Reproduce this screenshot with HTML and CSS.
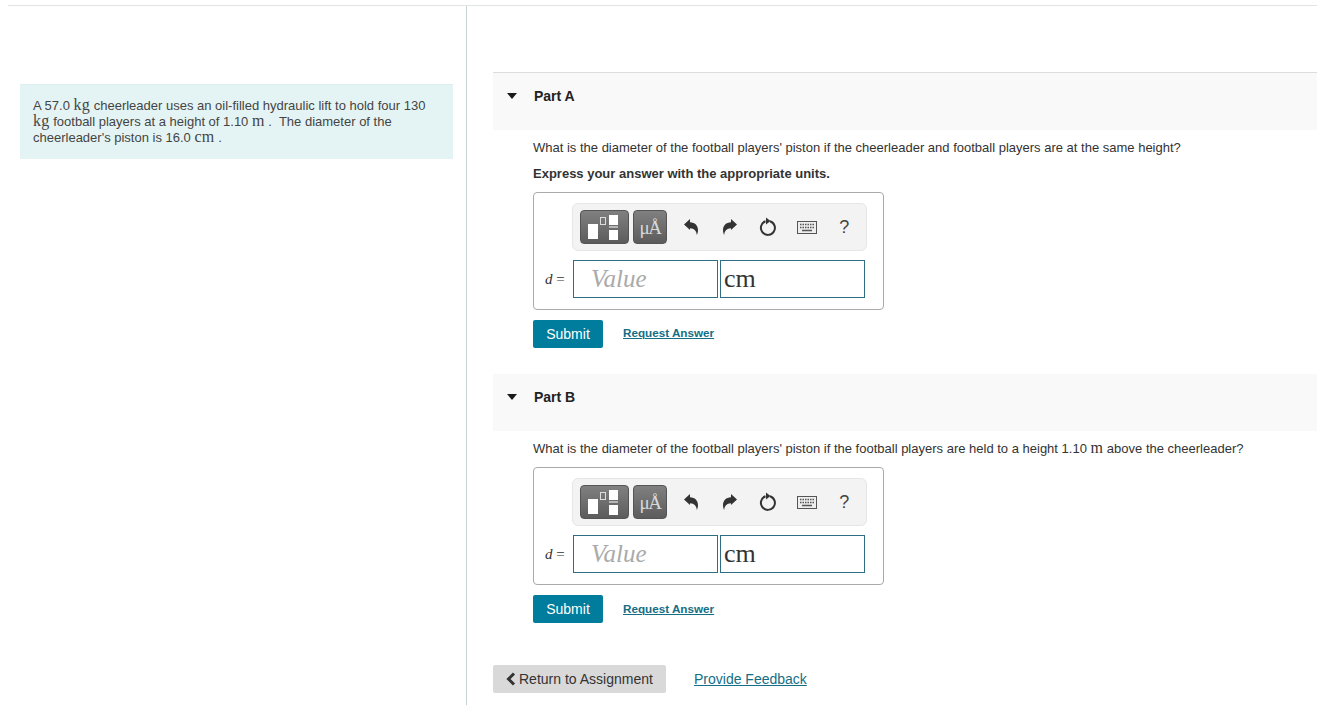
FILE: index.html
```html
<!DOCTYPE html>
<html lang="en">
<head>
    <meta charset="UTF-8">
    <title>Part A</title>
    <link rel="stylesheet" href="styles.css">
</head>
<body>
    <div class="page">
        <div class="left">
            <div class="passage">
                A 57.0 <span class="unit">kg</span> cheerleader uses an oil-filled hydraulic lift to hold four 130
                <span class="unit">kg</span> football players at a height of 1.10 <span class="unit">m</span> .&nbsp; The diameter of the
                cheerleader's piston is 16.0 <span class="unit">cm</span> .
            </div>
        </div>
        <div class="right">
            <div class="part part-a">
                <div class="part-head">
                    <span class="caret"></span>
                    <span class="part-title">Part A</span>
                </div>
                <div class="part-body">
                    <p class="question">What is the diameter of the football players' piston if the cheerleader and football players are at the same height?</p>
                    <p class="express">Express your answer with the appropriate units.</p>
                    <div class="answer">
                        <div class="toolbar">
                            <button class="tool tool-templates">
                                <svg width="30" height="25" viewBox="0 0 30 25">
                                    <rect x="0" y="9" width="10" height="15" fill="#fff"/>
                                    <rect x="12.500" y="2.500" width="5" height="7" fill="none" stroke="#ddd"/>
                                    <rect x="21" y="0" width="9" height="10" fill="#fff"/>
                                    <rect x="21" y="11.500" width="9" height="1" fill="#fff"/>
                                    <rect x="21" y="15" width="9" height="10" fill="#fff"/>
                                </svg>
                            </button>
                            <button class="tool tool-units">μÅ</button>
                            <span class="action action-first">
                                <svg width="14" height="16" viewBox="0 0 14 16"><path d="M0 5.500 6 0v3.200c5 .2 8 3.300 8 7.800 0 2-.5 3.700-1.200 5-.3-4-2.300-6.500-6.800-6.700V11Z" fill="#333"/></svg>
                            </span>
                            <span class="action">
                                <svg width="14" height="16" viewBox="0 0 14 16"><path d="M14 5.500 8 0v3.200c-5 .2-8 3.300-8 7.800 0 2 .5 3.700 1.200 5 .3-4 2.300-6.500 6.800-6.700V11Z" fill="#333"/></svg>
                            </span>
                            <span class="action">
                                <svg width="18" height="20" viewBox="0 0 18 20"><path d="M11 4.200a7 7 0 1 1-4.500.1" fill="none" stroke="#333" stroke-width="2"/><path d="M7 .5l4.500 3.500L7 7.500Z" fill="#333"/></svg>
                            </span>
                            <span class="action">
                                <svg width="20" height="13" viewBox="0 0 20 13"><rect x=".5" y=".5" width="19" height="12" fill="#eee" stroke="#555"/><path d="M3 3.500h14M3 6.500h14" stroke="#555" stroke-width="1.500" stroke-dasharray="1.500 1"/><path d="M5 9.500h10" stroke="#555" stroke-width="1.500"/></svg>
                            </span>
                            <span class="action help">?</span>
                        </div>
                        <div class="inputs">
                            <span class="var"><i>d</i> =</span>
                            <div class="field placeholder">Value</div>
                            <div class="field field-unit">cm</div>
                        </div>
                    </div>
                    <div class="actions">
                        <button class="submit">Submit</button>
                        <a href="#" class="request">Request Answer</a>
                    </div>
                </div>
            </div>
            <div class="part part-b">
                <div class="part-head">
                    <span class="caret"></span>
                    <span class="part-title">Part B</span>
                </div>
                <div class="part-body">
                    <p class="question">What is the diameter of the football players' piston if the football players are held to a height 1.10 <span class="unit">m</span> above the cheerleader?</p>
                    <div class="answer">
                        <div class="toolbar">
                            <button class="tool tool-templates">
                                <svg width="30" height="25" viewBox="0 0 30 25">
                                    <rect x="0" y="9" width="10" height="15" fill="#fff"/>
                                    <rect x="12.500" y="2.500" width="5" height="7" fill="none" stroke="#ddd"/>
                                    <rect x="21" y="0" width="9" height="10" fill="#fff"/>
                                    <rect x="21" y="11.500" width="9" height="1" fill="#fff"/>
                                    <rect x="21" y="15" width="9" height="10" fill="#fff"/>
                                </svg>
                            </button>
                            <button class="tool tool-units">μÅ</button>
                            <span class="action action-first">
                                <svg width="14" height="16" viewBox="0 0 14 16"><path d="M0 5.500 6 0v3.200c5 .2 8 3.300 8 7.800 0 2-.5 3.700-1.200 5-.3-4-2.300-6.500-6.800-6.700V11Z" fill="#333"/></svg>
                            </span>
                            <span class="action">
                                <svg width="14" height="16" viewBox="0 0 14 16"><path d="M14 5.500 8 0v3.200c-5 .2-8 3.300-8 7.800 0 2 .5 3.700 1.200 5 .3-4 2.300-6.500 6.800-6.700V11Z" fill="#333"/></svg>
                            </span>
                            <span class="action">
                                <svg width="18" height="20" viewBox="0 0 18 20"><path d="M11 4.200a7 7 0 1 1-4.500.1" fill="none" stroke="#333" stroke-width="2"/><path d="M7 .5l4.500 3.500L7 7.500Z" fill="#333"/></svg>
                            </span>
                            <span class="action">
                                <svg width="20" height="13" viewBox="0 0 20 13"><rect x=".5" y=".5" width="19" height="12" fill="#eee" stroke="#555"/><path d="M3 3.500h14M3 6.500h14" stroke="#555" stroke-width="1.500" stroke-dasharray="1.500 1"/><path d="M5 9.500h10" stroke="#555" stroke-width="1.500"/></svg>
                            </span>
                            <span class="action help">?</span>
                        </div>
                        <div class="inputs">
                            <span class="var"><i>d</i> =</span>
                            <div class="field placeholder">Value</div>
                            <div class="field field-unit">cm</div>
                        </div>
                    </div>
                    <div class="actions">
                        <button class="submit">Submit</button>
                        <a href="#" class="request">Request Answer</a>
                    </div>
                </div>
            </div>
            <div class="footer">
                <button class="return">
                    <svg class="chevron" width="10" height="14" viewBox="0 0 10 14"><path d="M8 1.500 2.500 7 8 12.500" fill="none" stroke="#333" stroke-width="3"/></svg>
                    Return to Assignment
                </button>
                <a href="#" class="feedback">Provide Feedback</a>
            </div>
        </div>
    </div>
</body>
</html>
```

FILE: styles.css
```css
html, body {
    margin: 0;
    padding: 0;
    height: 705px;
    overflow: hidden;
    background: #fff;
}

body {
    font-family: "Liberation Sans", Arial, sans-serif;
    font-size: 13px;
    color: #333;
}

.page {
    display: flex;
    height: 699px;
    margin: 5px 0 0 8px;
    border-top: 1px solid #e0e4e4;
}

.left {
    width: 459px;
    flex: none;
    border-right: 1px solid #c5d3d6;
    padding: 78px 0 0 12px;
    box-sizing: border-box;
}

.passage {
    width: 433px;
    height: 75px;
    box-sizing: border-box;
    padding: 13px 13px 0;
    background: #e4f4f5;
    border-top: 1px solid #dceeee;
    line-height: 16px;
    color: #444;
}

.unit {
    font-family: "Liberation Serif", serif;
    font-size: 16px;
    line-height: 0;
    letter-spacing: 0.3px;
}

.right {
    flex: 1;
    padding: 66px 0 0 26px;
    min-width: 0;
}

.part-head {
    display: flex;
    align-items: flex-start;
    background: #f9f9f9;
    padding-top: 15px;
    box-sizing: border-box;
}

.part-a .part-head {
    height: 58px;
    border-top: 1px solid #ddd;
}

.part-b .part-head {
    height: 57px;
}

.caret {
    width: 0;
    height: 0;
    margin: 5px 17px 0 14px;
    border-left: 5.500px solid transparent;
    border-right: 5.500px solid transparent;
    border-top: 6px solid #1a1a1a;
}

.part-title {
    font-size: 14px;
    font-weight: bold;
    color: #222;
}

.part-body {
    padding-left: 40px;
}

.question {
    margin: 0;
    padding-top: 10px;
    line-height: 16px;
}

.express {
    margin: 10px 0 0;
    line-height: 16px;
    font-weight: bold;
}

.answer {
    width: 351px;
    height: 118px;
    box-sizing: border-box;
    margin-top: 10px;
    padding: 10px 0 0 38px;
    border: 1px solid #aaa;
    border-radius: 4px;
}

.toolbar {
    display: flex;
    align-items: center;
    width: 295px;
    height: 48px;
    box-sizing: border-box;
    padding-left: 7px;
    background: #f3f3f3;
    border: 1px solid #e6e6e6;
    border-radius: 6px;
}

.tool {
    display: flex;
    align-items: center;
    justify-content: center;
    height: 34px;
    padding: 0;
    border: 1px solid #555;
    border-radius: 4px;
    background: linear-gradient(#808080, #5c5c5c);
    color: #d8d8d8;
}

.tool-templates {
    width: 49px;
    margin-right: 4px;
}

.tool-templates svg {
    margin-right: 4px;
}

.tool-units {
    width: 34px;
    font-family: "Liberation Serif", serif;
    font-size: 19px;
    letter-spacing: -1.500px;
    padding-top: 2px;
}

.action {
    display: flex;
    align-items: center;
    justify-content: center;
    width: 38.500px;
    height: 34px;
}

.action-first {
    margin-left: 5px;
}

.help {
    margin-left: -1px;
    font-size: 18px;
    color: #444;
}

.inputs {
    display: flex;
    align-items: center;
    margin: 9px 0 0 -27px;
}

.var {
    width: 28px;
    font-family: "Liberation Serif", serif;
    font-size: 15px;
}

.field {
    width: 145px;
    height: 38px;
    box-sizing: border-box;
    border: 1px solid #2d6f80;
    font-family: "Liberation Serif", serif;
    font-size: 26px;
    line-height: 36px;
}

.placeholder {
    padding-left: 17px;
    color: #aaa;
    font-size: 25px;
    font-style: italic;
}

.field-unit {
    margin-left: 2px;
    padding-left: 3px;
}

.actions {
    display: flex;
    align-items: center;
    margin-top: 10px;
}

.submit {
    width: 70px;
    height: 28px;
    padding: 0;
    border: none;
    border-radius: 2px;
    background: #007c9c;
    color: #fff;
    font-family: inherit;
    font-size: 14px;
}

.request {
    margin: -4px 0 0 20px;
    color: #146e85;
    font-size: 11.700px;
    font-weight: bold;
}

.part-b {
    margin-top: 26px;
}

.part-b .request {
    margin-top: -2px;
}

.footer {
    display: flex;
    align-items: center;
    margin-top: 42px;
}

.return {
    display: flex;
    align-items: center;
    gap: 3px;
    width: 173px;
    height: 28px;
    padding: 0 0 0 13px;
    border: none;
    border-radius: 2px;
    background: #d9d9d9;
    color: #333;
    font-family: inherit;
    font-size: 14px;
}

.feedback {
    margin-left: 28px;
    font-size: 14px;
    color: #146e85;
}
```
